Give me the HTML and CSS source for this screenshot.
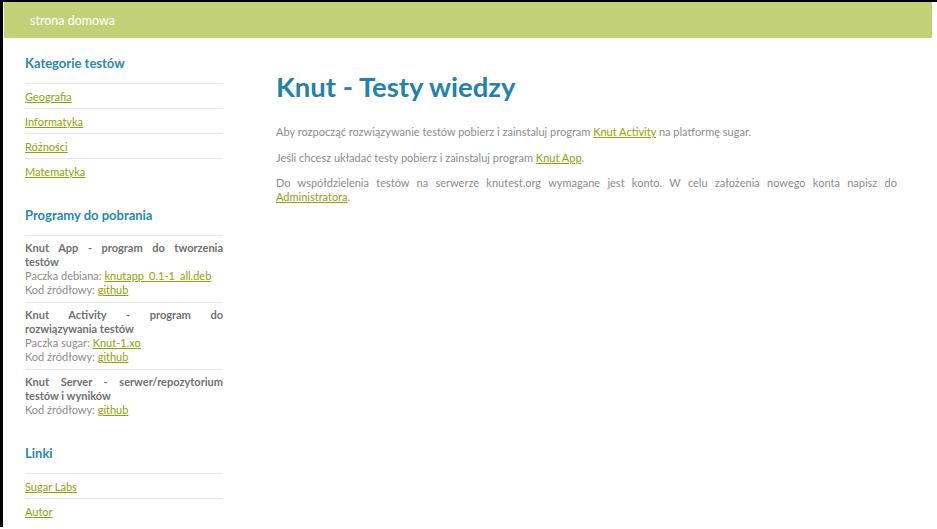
FILE: index.html
```html
<!DOCTYPE html>
<html lang="pl">
<head>
<meta charset="utf-8">
<title>Knut - Testy wiedzy</title>
<link rel="stylesheet" href="styles.css">
</head>
<body>
<div class="frame">
  <header class="topbar"><a class="home" href="#">strona domowa</a></header>
  <div class="layout">
    <aside class="sidebar">
      <section class="block">
        <h2>Kategorie testów</h2>
        <ul class="links">
          <li><a href="#">Geografia</a></li>
          <li><a href="#">Informatyka</a></li>
          <li><a href="#">Różności</a></li>
          <li><a href="#">Matematyka</a></li>
        </ul>
      </section>
      <section class="block block-programs">
        <h2>Programy do pobrania</h2>
        <ul class="programs">
          <li><strong>Knut App - program do tworzenia testów</strong><br>Paczka debiana: <a href="#">knutapp_0.1-1_all.deb</a><br>Kod źródłowy: <a href="#">github</a></li>
          <li><strong>Knut Activity - program do rozwiązywania testów</strong><br>Paczka sugar: <a href="#">Knut-1.xo</a><br>Kod źródłowy: <a href="#">github</a></li>
          <li><strong>Knut Server - serwer/repozytorium testów i wyników</strong><br>Kod źródłowy: <a href="#">github</a></li>
        </ul>
      </section>
      <section class="block">
        <h2>Linki</h2>
        <ul class="links">
          <li><a href="#">Sugar Labs</a></li>
          <li><a href="#">Autor</a></li>
        </ul>
      </section>
    </aside>
    <main class="content">
      <h1>Knut - Testy wiedzy</h1>
      <p>Aby rozpocząć rozwiązywanie testów pobierz i zainstaluj program <a href="#">Knut Activity</a> na platformę sugar.</p>
      <p>Jeśli chcesz układać testy pobierz i zainstaluj program <a href="#">Knut App</a>.</p>
      <p>Do współdzielenia testów na serwerze knutest.org wymagane jest konto. W celu założenia nowego konta napisz do <a href="#">Administratora</a>.</p>
    </main>
  </div>
</div>
</body>
</html>
```

FILE: styles.css
```css
html, body {
  margin: 0;
  padding: 0;
  background: #fff;
}
body {
  font-family: Lato, "Open Sans", sans-serif;
  font-size: 11px;
  color: #8c8c8c;
}
.frame {
  border-left: 3px solid #000;
  border-top: 2px solid #000;
  height: 527px;
  overflow: hidden;
  box-sizing: border-box;
  padding-left: 1px;
}
.topbar {
  background: #c2d178;
  height: 36px;
  width: 928px;
  display: flex;
  align-items: center;
  padding-left: 26px;
  box-sizing: border-box;
}
.home {
  color: #fff;
  text-decoration: none;
  font-size: 12.5px;
}
.layout {
  display: flex;
  padding-left: 21px;
}
.sidebar {
  width: 198px;
  flex: none;
  padding-top: 16px;
}
.block {
  margin-bottom: 23px;
}
.block-programs {
  margin-bottom: 22px;
}
.block h2 {
  margin: 0;
  font-size: 13px;
  font-weight: bold;
  color: #2b87ad;
  height: 29px;
  line-height: 18px;
  border-bottom: 1px solid #e6e6e6;
}
.links {
  list-style: none;
  margin: 0;
  padding: 0;
}
.links li {
  border-bottom: 1px solid #e6e6e6;
  height: 24px;
  line-height: 25px;
}
.links li:last-child {
  border-bottom: none;
}
a {
  color: #8ea20b;
  text-decoration: underline;
}
.programs {
  list-style: none;
  margin: 0;
  padding: 0;
}
.programs li {
  border-bottom: 1px solid #e6e6e6;
  padding: 5px 0 5px;
  line-height: 14px;
  text-align: justify;
}
.programs li:last-child {
  border-bottom: none;
}
.programs strong {
  color: #707070;
}
.content {
  flex: 1;
  padding-left: 53px;
  padding-right: 40px;
  padding-top: 32px;
}
.content h1 {
  margin: 0 0 21px;
  font-size: 27.5px;
  line-height: 34px;
  color: #2482a9;
  font-weight: bold;
}
.content p {
  margin: 0 0 11.5px;
  line-height: 14px;
  text-align: justify;
}
```
